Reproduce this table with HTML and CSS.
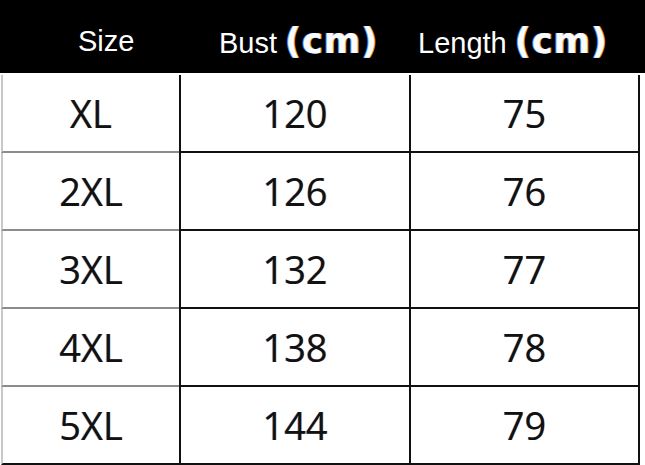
FILE: index.html
```html
<!DOCTYPE html>
<html lang="en">
<head>
<meta charset="utf-8">
<title>Size chart</title>
<link rel="stylesheet" href="styles.css">
</head>
<body>
<div class="chart">
  <div class="head">
    <div class="hcell hsize">Size</div>
    <div class="hcell hbust">Bust <span class="unit">(cm)</span></div>
    <div class="hcell hlen">Length <span class="unit">(cm)</span></div>
  </div>
  <div class="body">
    <div class="row"><div class="cell c1">XL</div><div class="cell c2">120</div><div class="cell c3">75</div></div>
    <div class="row"><div class="cell c1">2XL</div><div class="cell c2">126</div><div class="cell c3">76</div></div>
    <div class="row"><div class="cell c1">3XL</div><div class="cell c2">132</div><div class="cell c3">77</div></div>
    <div class="row"><div class="cell c1">4XL</div><div class="cell c2">138</div><div class="cell c3">78</div></div>
    <div class="row last"><div class="cell c1">5XL</div><div class="cell c2">144</div><div class="cell c3">79</div></div>
  </div>
</div>
</body>
</html>
```

FILE: styles.css
```css
html, body {
  margin: 0;
  padding: 0;
  background: #ffffff;
}
.chart {
  width: 645px;
  height: 465px;
  overflow: hidden;
}
.head {
  height: 73px;
  background: #000000;
  display: grid;
  grid-template-columns: 219px 199px 1fr;
  align-items: center;
  padding-top: 9px;
  box-sizing: border-box;
  color: #ffffff;
  font-family: "Liberation Sans", Arial, sans-serif;
  font-size: 29px;
  white-space: nowrap;
}
.hsize {
  padding-left: 78px;
}
.unit {
  font-family: "DejaVu Sans", Verdana, sans-serif;
  font-weight: bold;
  font-size: 35px;
  letter-spacing: 1px;
  color: #fbfbff;
  text-shadow: -1px 0 rgba(90, 170, 255, 0.85), 1px 0 rgba(255, 175, 70, 0.85);
}
.body {
  padding-top: 2px;
  margin-left: 1px;
}
.row {
  display: grid;
  grid-template-columns: 178px 230px 231px;
  height: 78px;
}
.cell {
  box-sizing: border-box;
  display: flex;
  align-items: center;
  justify-content: center;
  border-bottom: 2px solid #111111;
  font-family: "Open Sans", "Noto Sans", sans-serif;
  font-size: 38px;
  color: #111111;
  text-shadow: -0.6px 0 rgba(40, 110, 220, 0.5), 0.6px 0 rgba(230, 150, 40, 0.5);
}
.c1 {
  border-left: 2px solid #c8c8c8;
  border-bottom-color: #8c8c8c;
}
.c2 {
  border-left: 2px solid #111111;
}
.c3 {
  border-left: 2px solid #111111;
  border-right: 2px solid #111111;
}
.last .c1 {
  border-bottom-color: #111111;
}
```
